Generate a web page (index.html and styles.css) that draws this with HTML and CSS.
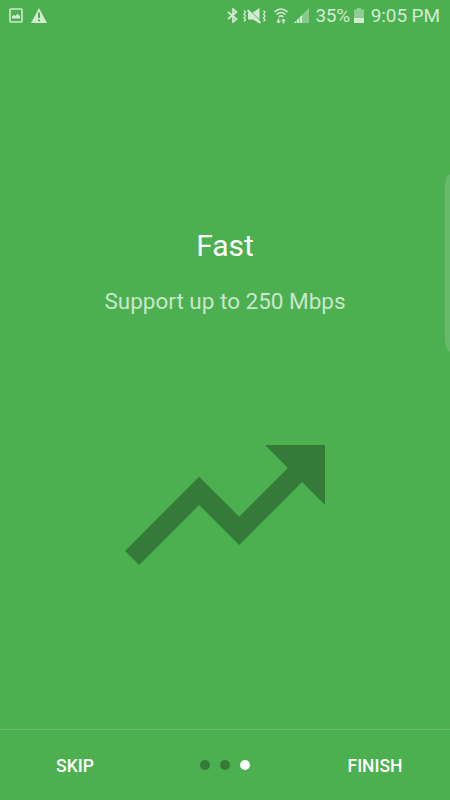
FILE: index.html
```html
<!DOCTYPE html>
<html lang="en">
  <head>
    <meta charset="utf-8">
    <title>Intro - Fast</title>
    <link rel="stylesheet" href="styles.css">
  </head>
  <body>

    <div class="screen">

      <header class="status-bar">
        <div class="notifications">
          <svg class="icon-image" width="14" height="15" viewBox="0 0 14 15">
            <rect x="1" y="1" width="12" height="13" rx="1" fill="none" stroke="currentColor" stroke-width="1.600"/>
            <path d="M3 10.500V8l2-1 1.500 1L8.500 5.500 10 7.500h1v3z" fill="currentColor"/>
          </svg>
          <svg class="icon-warning" width="16" height="15" viewBox="0 0 16 15">
            <path fill="currentColor" fill-rule="evenodd" d="M8 0l8 15H0zM7 4.500v5.500h2V4.500zM7 11.500v1.800h2v-1.800z"/>
          </svg>
        </div>

        <div class="system">
          <svg class="icon-bluetooth" width="11" height="15" viewBox="0 0 11 15">
            <path fill="none" stroke="currentColor" stroke-width="1.700" d="M1 4l8.500 7L6 14V1l3.500 3L1 11"/>
          </svg>
          <svg class="icon-mute" width="23" height="16" viewBox="0 0 23 16">
            <path fill="currentColor" d="M5 4.500h5L16.500 0v15.500L10 11.500H5z"/>
            <path stroke="#4caf50" stroke-width="1" d="M6 1.500l12 12"/>
            <path stroke="currentColor" stroke-width="1.800" d="M4.500 2l13 13"/>
            <path fill="none" stroke="currentColor" stroke-width="1.300" d="M1 2.500l1.500 1.800L1 6.200l1.500 1.900L1 10l1.500 1.800L1 13.500M20.500 2.500L22 4.300l-1.500 1.900L22 8.100 20.500 10l1.500 1.800-1.500 1.700"/>
          </svg>
          <svg class="icon-wifi" width="14" height="16" viewBox="0 0 14 16">
            <path fill="none" stroke="currentColor" stroke-width="1.600" d="M0.500 4q6.500-6 13 0M2.500 6.500q4.500-4 9 0M4.700 8.800q2.300-2 4.600 0"/>
            <path fill="currentColor" d="M3.700 10.500h1.600V13H7l-2.500 2.600L2 13h1.700zM8.700 15.500h1.600V13H12l-2.500-2.600L7 13h1.700z"/>
          </svg>
          <svg class="icon-signal" width="15" height="15" viewBox="0 0 15 15">
            <path fill="currentColor" opacity="0.45" d="M15 0v15H0z"/>
            <path fill="currentColor" d="M0 15l2-2v2zM3 12l2-2v5H3zM6 9l2-2v8H6z"/>
          </svg>
          <span class="percent">35%</span>
          <svg class="icon-battery" width="10" height="15" viewBox="0 0 10 15">
            <path fill="currentColor" opacity="0.5" d="M3 0h4v1.500h3V10H0V1.500h3z"/>
            <path fill="currentColor" d="M0 10h10v5H0z"/>
          </svg>
          <span class="clock">9:05 PM</span>
        </div>
      </header>

      <main class="slide">
        <h1 class="title">Fast</h1>
        <p class="description">Support up to 250 Mbps</p>
        <svg class="trend" width="200" height="120" viewBox="2 6 20 12">
          <path d="M16 6l2.290 2.290-4.880 4.880-4-4L2 16.590 3.410 18l6-6 4 4 6.300-6.290L22 12V6z"/>
        </svg>
      </main>

      <footer class="nav">
        <button class="nav-button">SKIP</button>
        <div class="dots">
          <span class="dot"></span>
          <span class="dot"></span>
          <span class="dot active"></span>
        </div>
        <button class="nav-button">FINISH</button>
      </footer>

      <!-- Edge panel handle, lies over the slide -->
      <div class="edge-handle"></div>

    </div>

  </body>
</html>
```
FILE: styles.css
```css
body {
  margin: 0;
  font-family: Roboto, sans-serif;
  background-color: #4caf50;
}

.screen {
  position: relative;
  display: flex;
  flex-direction: column;
  height: 800px;
  overflow: hidden;
}

/* Status bar */

.status-bar {
  display: flex;
  justify-content: space-between;
  height: 31px;
  padding: 0 10px 0 9px;
  color: #d2ebd3;
  font-size: 19px;
  line-height: 32px;
}

.notifications,
.system {
  display: flex;
  align-items: center;
}

.icon-warning {
  margin-left: 8px;
}

.icon-mute {
  margin-left: 5px;
}

.icon-wifi {
  margin-left: 8px;
}

.icon-signal {
  margin-left: 6px;
}

.percent {
  margin-left: 6px;
  letter-spacing: -0.3px;
}

.icon-battery {
  margin-left: 4px;
}

.clock {
  margin-left: 7px;
  letter-spacing: -0.1px;
}

/* Slide */

.slide {
  flex: 1;
  display: flex;
  flex-direction: column;
  align-items: center;
}

.title {
  margin: 197px 0 0;
  color: #fff;
  font-size: 30px;
  font-weight: 400;
  line-height: 36px;
}

.description {
  margin: 22px 0 0;
  color: #c9e7cb;
  font-size: 22.5px;
  line-height: 30px;
}

.trend {
  margin-top: 129px;
  fill: #357a38;
}

/* Bottom navigation */

.nav {
  display: grid;
  grid-template-columns: 150px 150px 150px;
  align-items: center;
  justify-items: center;
  height: 70px;
  border-top: 1px solid #68bb6b;
}

.nav-button {
  padding: 2px 0 0;
  border: none;
  background: none;
  color: #fff;
  font-family: inherit;
  font-size: 17.5px;
  font-weight: 500;
  line-height: 24px;
}

.dots {
  display: flex;
  gap: 10px;
}

.dot {
  width: 10px;
  height: 10px;
  border-radius: 50%;
  background-color: #357a38;
}

.dot.active {
  background-color: #fff;
}

.edge-handle {
  position: absolute;
  top: 174px;
  right: -7px;
  width: 12px;
  height: 178px;
  border-left: 1px solid #5aab5d;
  border-radius: 12px / 24px;
  background-color: #66ba69;
}
```
